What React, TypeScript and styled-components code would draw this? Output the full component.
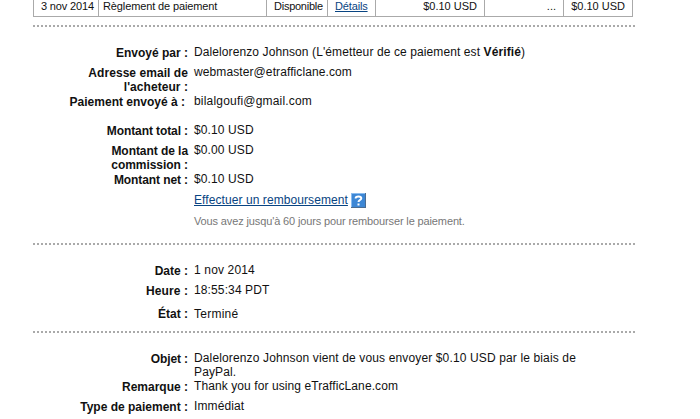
import React from "react";
import styled, { createGlobalStyle } from "styled-components";

const GlobalStyle = createGlobalStyle`
  body {
    margin: 0;
    background: #fff;
    color: #111;
    font: 12px/14px "Liberation Sans", Arial, sans-serif;
    overflow: hidden;
  }
`;

const Page = styled.main`
  width: 700px;
  height: 419px;
  box-sizing: border-box;
  padding-left: 33px;
  overflow: hidden;
`;

const History = styled.div`
  display: grid;
  grid-template-columns: 65px 168px 61px 48px 109px 79px 69px;
  width: 600px;
  height: 17px;
  box-sizing: border-box;
  border: solid #aaa;
  border-width: 0 0 1px 1px;
  font-size: 11px;
  line-height: 13px;
`;

const Cell = styled.div<{ $end?: boolean; $pad: number; $track?: number }>`
  border-right: 1px solid #aaa;
  white-space: nowrap;
  letter-spacing: ${(p) => p.$track ?? 0}px;
  text-align: ${(p) => (p.$end ? "right" : "left")};
  padding: ${(p) => (p.$end ? `0 ${p.$pad}px 0 0` : `0 0 0 ${p.$pad}px`)};
`;

const Divider = styled.div`
  width: 602px;
  height: 2px;
  background: repeating-linear-gradient(to right, #aaa 0 2px, transparent 2px 4px);
`;

const Section = styled.section<{ $top: number; $height: number }>`
  box-sizing: border-box;
  height: ${(p) => p.$height}px;
  padding-top: ${(p) => p.$top}px;
`;

const Row = styled.div<{ $height: number }>`
  display: grid;
  grid-template-columns: 155px 430px;
  column-gap: 6px;
  height: ${(p) => p.$height}px;
`;

const Label = styled.div<{ $drop?: number; $inset?: number }>`
  padding-top: ${(p) => p.$drop ?? 1}px;
  padding-right: ${(p) => p.$inset ?? 0}px;
  font-weight: bold;
  text-align: right;
  white-space: pre-line;
`;

const Value = styled.div`
  white-space: pre-line;
`;

const Text = styled.span<{ $track?: number }>`
  letter-spacing: ${(p) => p.$track ?? 0}px;
`;

const Link = styled.a<{ $track?: number }>`
  color: #084482;
  text-decoration: underline;
  text-underline-offset: 1px;
  text-decoration-skip-ink: none;
  letter-spacing: ${(p) => p.$track ?? 0}px;
`;

const Refund = styled.div`
  display: flex;
  gap: 3px;
  height: 14px;
`;

const HelpIcon = styled.svg`
  display: block;
`;

const Hint = styled.div`
  padding-top: 8px;
  color: #777;
  font-size: 11px;
  line-height: 13px;
  letter-spacing: -0.13px;
`;

interface FieldProps {
  label: string;
  height: number;
  drop?: number;
  inset?: number;
  labelTrack?: number;
  track?: number;
  children: React.ReactNode;
}

function Field({ label, height, drop, inset, labelTrack, track, children }: FieldProps) {
  return (
    <Row $height={height}>
      <Label $drop={drop} $inset={inset}>
        <Text $track={labelTrack}>{label}</Text>
      </Label>
      <Value>
        <Text $track={track}>{children}</Text>
      </Value>
    </Row>
  );
}

export default function App() {
  return (
    <>
      <GlobalStyle />
      <Page>
        <History>
          <Cell $pad={7} $track={-0.15}>3 nov 2014</Cell>
          <Cell $pad={4} $track={-0.12}>Règlement de paiement</Cell>
          <Cell $pad={7} $track={-0.25}>Disponible</Cell>
          <Cell $pad={7}><Link $track={-0.15}>Détails</Link></Cell>
          <Cell $end $pad={7}>$0.10 USD</Cell>
          <Cell $end $pad={7}>...</Cell>
          <Cell $end $pad={7}>$0.10 USD</Cell>
        </History>
        <Section $top={8} $height={8} />
        <Divider />
        <Section $top={18} $height={216}>
          <Field label="Envoyé par :" height={20} track={0.1}>
            Dalelorenzo Johnson (L'émetteur de ce paiement est <b>Vérifié</b>)
          </Field>
          <Field label={"Adresse email de\nl'acheteur :"} height={29} labelTrack={0.06} track={0.1}>
            webmaster@etrafficlane.com
          </Field>
          <Field label="Paiement envoyé à :" height={29} inset={3} track={0.19}>bilalgoufi@gmail.com</Field>
          <Field label="Montant total :" height={20} labelTrack={-0.1} track={0.12}>$0.10 USD</Field>
          <Field label={"Montant de la\ncommission :"} height={29} labelTrack={-0.06} track={0.12}>$0.00 USD</Field>
          <Field label="Montant net :" height={21} labelTrack={-0.1} track={0.12}>$0.10 USD</Field>
          <Row $height={50}>
            <Label />
            <Value>
              <Refund>
                <Link $track={0.08}>Effectuer un remboursement</Link>
                <HelpIcon width="15" height="15" viewBox="0 0 15 15">
                  <rect width="15" height="15" fill="#4b6c91" />
                  <rect width="14" height="14" fill="#8abcf0" />
                  <rect x="1" y="1" width="13" height="13" fill="#3d87d5" />
                  <path d="M4.7 5.5V5Q4.7 3.4 7.5 3.4Q10.3 3.4 10.3 5.3Q10.3 6.4 8.8 7.1Q7.5 7.7 7.5 9M7.5 10.5v2" fill="none" stroke="#fff" strokeWidth="2" />
                </HelpIcon>
              </Refund>
              <Hint>Vous avez jusqu'à 60 jours pour rembourser le paiement.</Hint>
            </Value>
          </Row>
        </Section>
        <Divider />
        <Section $top={18} $height={86}>
          <Field label="Date :" height={20} track={0.15}>1 nov 2014</Field>
          <Field label="Heure :" height={24} labelTrack={0.08} track={0.12}>18:55:34 PDT</Field>
          <Field label="État :" height={14} drop={0} track={0.25}>Terminé</Field>
        </Section>
        <Divider />
        <Section $top={18} $height={86}>
          <Field label="Objet :" height={28} labelTrack={-0.12} track={0.135}>
            {"Dalelorenzo Johnson vient de vous envoyer $0.10 USD par le biais de\nPayPal."}
          </Field>
          <Field label="Remarque :" height={20} track={0.09}>Thank you for using eTrafficLane.com</Field>
          <Field label="Type de paiement :" height={14} track={0.12}>Immédiat</Field>
        </Section>
      </Page>
    </>
  );
}
